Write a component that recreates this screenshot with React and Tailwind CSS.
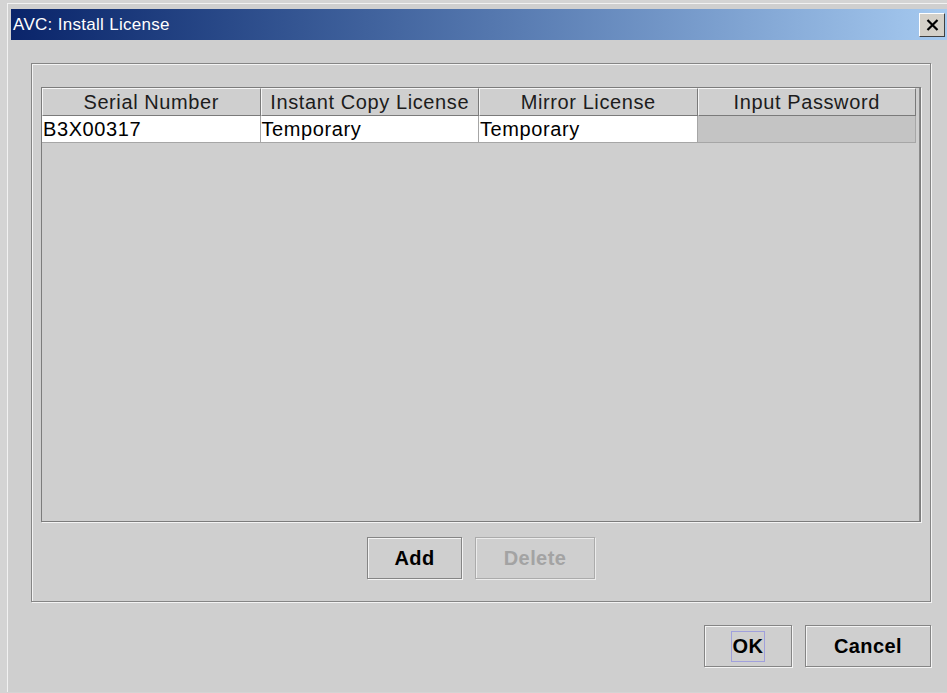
import React from 'react';

const columns = ['Serial Number', 'Instant Copy License', 'Mirror License', 'Input Password'];
const rows = [['B3X00317', 'Temporary', 'Temporary', null]];

const etched = 'border border-[#858585] shadow-[inset_1px_1px_0_#f4f4f4,1px_1px_0_#f4f4f4]';

function DialogButton({ children, width, disabled, focused }) {
  return (
    <button
      disabled={disabled}
      className={`h-[42px] ${width} flex items-center justify-center font-bold text-[20px] tracking-[0.4px] ${
        disabled
          ? 'border border-[#ababab] shadow-[inset_1px_1px_0_#ececec,1px_1px_0_#ececec] text-[#a3a3a3]'
          : `${etched} text-black`
      }`}
    >
      {focused ? (
        <span className="border border-[#a0a0dc] px-[1px] h-[31px] flex items-center">{children}</span>
      ) : (
        children
      )}
    </button>
  );
}

export default function App() {
  return (
    <div
      className="w-[947px] h-[693px] overflow-hidden bg-[#d4d4d4] pt-[3px] pl-[7px]"
      style={{ fontFamily: '"Liberation Sans", Arial, sans-serif' }}
    >
      <div className="w-[940px] h-[689px] bg-[#cfcfcf] border-t border-l border-[#f2f2f2] border-b-[#7c7c7c] flex flex-col">
        {/* title bar */}
        <div className="mt-[5px] ml-[3px] h-[31px] flex items-center bg-gradient-to-r from-[#0a246a] to-[#a6caf0]">
          <span className="pl-[2px] text-white text-[17px] tracking-[0.3px]">AVC: Install License</span>
          <div className="ml-auto mr-[2px] w-[26px] h-[24px] bg-[#d4d0c8] border border-t-white border-l-white border-b-[#404040] border-r-[#404040] flex items-center justify-center">
            <svg width="13" height="12" viewBox="0 0 13 12">
              <path d="M1.5 1 L11.5 11 M11.5 1 L1.5 11" stroke="#000" strokeWidth="2.2" />
            </svg>
          </div>
        </div>

        <div className="pl-[23px] pt-[23px] w-[923px]">
          {/* group panel */}
          <div className={`h-[539px] ${etched} pl-[9px] pr-[9px] pt-[23px] flex flex-col`}>
            {/* table scroll pane */}
            <div className="h-[435px] border border-[#7c7c7c] shadow-[1px_1px_0_#f4f4f4] bg-[#cfcfcf] flex flex-col">
              <div className="flex pr-[3px] border-r border-[#8a8a8a] flex-1 flex-col">
                <div className="flex h-[28px]">
                  {columns.map((c) => (
                    <div
                      key={c}
                      className="flex-1 border border-t-[#f6f6f6] border-l-[#f6f6f6] border-b-[#7a7a7a] border-r-[#7a7a7a] flex items-center justify-center text-[20px] text-[#1c1c1c] tracking-[0.6px]"
                    >
                      {c}
                    </div>
                  ))}
                </div>
                {rows.map((r, i) => (
                  <div key={i} className="flex h-[27px]">
                    {r.map((v, j) => (
                      <div
                        key={j}
                        className={`flex-1 border-r border-b border-[#a6a6a6] px-[1px] flex items-center text-[20px] text-black tracking-[0.6px] ${
                          v === null ? 'bg-[#c4c4c4]' : 'bg-white'
                        }`}
                      >
                        {v}
                      </div>
                    ))}
                  </div>
                ))}
              </div>
            </div>

            <div className="flex justify-center gap-[13px] mt-[15px]">
              <DialogButton width="w-[95px]">Add</DialogButton>
              <DialogButton width="w-[120px]" disabled>
                Delete
              </DialogButton>
            </div>
          </div>

          <div className="flex justify-end gap-[13px] mt-[23px]">
            <DialogButton width="w-[88px]" focused>
              OK
            </DialogButton>
            <DialogButton width="w-[126px]">Cancel</DialogButton>
          </div>
        </div>
      </div>
    </div>
  );
}
